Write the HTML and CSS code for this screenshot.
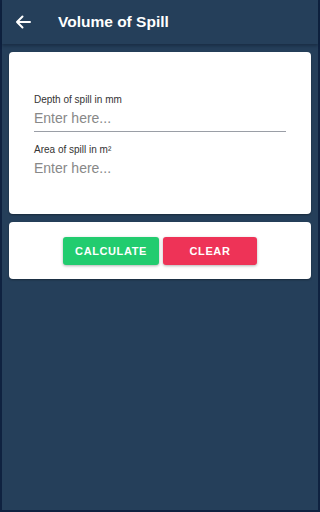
FILE: index.html
```html
<!DOCTYPE html>
<html>
<head>
<meta charset="utf-8">
<link rel="stylesheet" href="styles.css">
</head>
<body>
<div class="frame">
  <header class="bar">
    <svg class="back" width="16" height="14" viewBox="0 0 16 14"><path d="M15 7H2M7.5 1.5L2 7l5.5 5.5" fill="none" stroke="#fff" stroke-width="2" stroke-linecap="round" stroke-linejoin="round"/></svg>
    <h1 class="title">Volume of Spill</h1>
  </header>
  <main class="content">
    <section class="card form">
      <div class="field">
        <label class="label">Depth of spill in mm</label>
        <div class="input underline">Enter here...</div>
      </div>
      <div class="field">
        <label class="label">Area of spill in m²</label>
        <div class="input">Enter here...</div>
      </div>
    </section>
    <section class="card actions">
      <button class="btn calc">CALCULATE</button>
      <button class="btn clear">CLEAR</button>
    </section>
  </main>
</div>
</body>
</html>
```
FILE: styles.css
```css
html, body { margin: 0; padding: 0; }
html { background: #253f5a; }
body { font-family: "Liberation Sans", Arial, sans-serif; background: #253f5a; }
.frame {
  width: 100%; height: 512px; box-sizing: border-box;
  background: #253f5a;
  border-left: 2px solid #0f2240;
  border-right: 2px solid #0f2240;
  border-bottom: 2px solid #0f2240;
  display: flex; flex-direction: column;
}
.bar {
  height: 44px; flex: none;
  display: flex; align-items: center;
  padding-left: 13px;
  box-shadow: 0 2px 3px rgba(10, 25, 45, 0.45);
  position: relative; z-index: 1;
}
.back { display: block; }
.title {
  margin: 0 0 0 27px; color: #fff; font-size: 15.5px; font-weight: bold;
}
.content { padding: 8px 7px 0 7px; display: flex; flex-direction: column; gap: 8px; }
.card { background: #fff; border-radius: 4px; box-shadow: 0 1px 2px rgba(0,0,0,0.35); }
.form { height: 162px; box-sizing: border-box; padding: 42px 25px 0 25px; }
.field { display: flex; flex-direction: column; }
.field + .field { margin-top: 12px; }
.label { font-size: 10px; line-height: 12px; color: #333; }
.input { font-size: 14px; line-height: 24px; height: 25px; color: #888; }
.underline { border-bottom: 1px solid #9a9ea6; }
.actions {
  height: 57px; box-sizing: border-box;
  display: flex; justify-content: center; align-items: flex-start;
  padding-top: 15px; gap: 4px;
}
.btn {
  height: 28px; border: none; border-radius: 3px; color: #fff;
  font-family: "Liberation Sans", Arial, sans-serif;
  font-weight: bold; font-size: 11px; letter-spacing: 0.6px;
  box-shadow: 0 1px 3px rgba(0,0,0,0.3); padding: 0;
}
.calc { width: 96px; background: #22cc6f; }
.clear { width: 94px; background: #ee3357; }
```
